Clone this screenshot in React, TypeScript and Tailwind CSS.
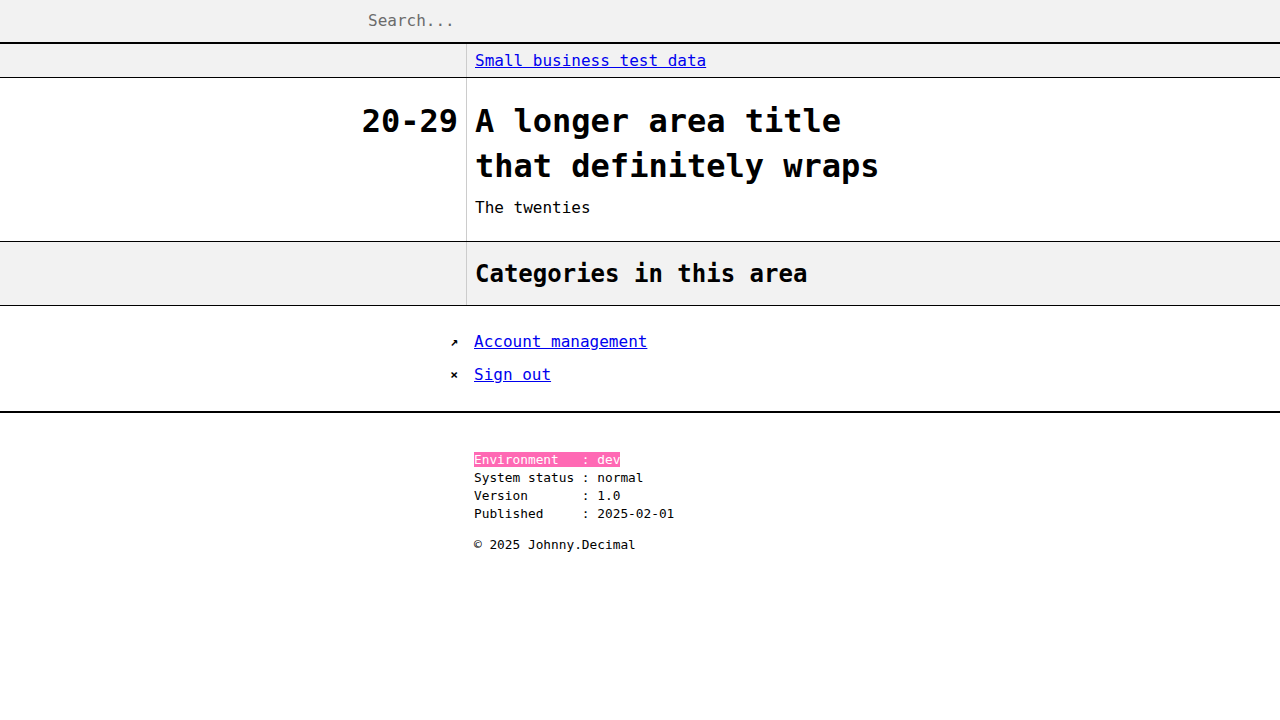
import React from "react";

const mono = { fontFamily: '"DejaVu Sans Mono", "Liberation Mono", monospace' };

export default function App() {
  return (
    <div className="min-h-[720px] bg-white text-black" style={mono}>
      {/* Search header */}
      <div className="bg-[#f2f2f2] border-b-2 border-black">
        <input
          type="text"
          placeholder="Search..."
          className="block w-full bg-transparent pl-[368px] py-[9px] text-[16px] leading-[24px] outline-none placeholder:text-[#6b6b6b]"
          style={mono}
        />
      </div>

      {/* Breadcrumb row */}
      <div className="grid grid-cols-[467px_1fr] bg-[#f2f2f2] border-b border-black">
        <div className="border-r border-[#cccccc]" />
        <div className="px-2 pt-[5px] pb-1 text-[16px] leading-[24px]">
          <a href="#" className="text-[#0000ee] underline">Small business test data</a>
        </div>
      </div>

      {/* Title row */}
      <div className="grid grid-cols-[467px_1fr] border-b border-black">
        <div className="border-r border-[#cccccc] px-2 pt-[21px] text-right">
          <h1 className="text-[32px] leading-[45px] font-bold">20-29</h1>
        </div>
        <div className="px-2 pt-[21px] pb-[21px]">
          <h1 className="text-[32px] leading-[45px] font-bold max-w-[420px]">A longer area title that definitely wraps</h1>
          <p className="mt-[7px] text-[16px] leading-[24px]">The twenties</p>
        </div>
      </div>

      {/* Categories heading */}
      <div className="grid grid-cols-[467px_1fr] bg-[#f2f2f2] border-b border-black">
        <div className="border-r border-[#cccccc]" />
        <div className="px-2 pt-[17px] pb-[16px]">
          <h2 className="text-[24px] leading-[30px] font-bold">Categories in this area</h2>
        </div>
      </div>

      {/* Links list */}
      <div className="border-b-2 border-black py-6">
        <ul className="flex flex-col gap-[9px]">
          <li className="grid grid-cols-[458px_1fr] gap-4 text-[16px] leading-[24px]">
            <span className="text-right text-[13px] font-bold">↗</span>
            <a href="#" className="text-[#0000ee] underline">Account management</a>
          </li>
          <li className="grid grid-cols-[458px_1fr] gap-4 text-[16px] leading-[24px]">
            <span className="text-right text-[13px] font-bold">×</span>
            <a href="#" className="text-[#0000ee] underline">Sign out</a>
          </li>
        </ul>
      </div>

      {/* Footer */}
      <footer className="pl-[474px] pt-[38px] text-[12.8px] leading-[18px]">
        <pre className="whitespace-pre" style={mono}>
          <span className="bg-[#ff69b4] text-white">{"Environment   : dev"}</span>
          {"\nSystem status : normal\nVersion       : 1.0\nPublished     : 2025-02-01"}
        </pre>
        <p className="mt-[13px]">© 2025 Johnny.Decimal</p>
      </footer>
    </div>
  );
}
